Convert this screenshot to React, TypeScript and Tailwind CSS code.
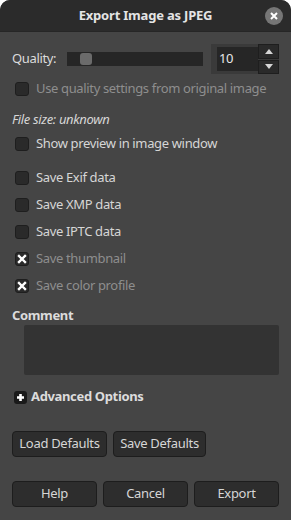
import React, { useState } from 'react';

const font = { fontFamily: '"Noto Sans", "Open Sans", sans-serif' };

const Check: React.FC<{ checked?: boolean; disabled?: boolean; label: string }> = ({ checked, disabled, label }) => (
  <div className="flex items-center h-[20px] pl-[15px] gap-[7px]">
    <div className="w-[14px] h-[14px] shrink-0 rounded-[3px] bg-[#2a2a2a] border border-[#1e1e1e] flex items-center justify-center">
      {checked && (
        <svg width="10" height="10" viewBox="0 0 10 10">
          <path d="M2 2 L8 8 M8 2 L2 8" stroke="#ffffff" strokeWidth="2.4" strokeLinecap="square" />
        </svg>
      )}
    </div>
    <span className={`whitespace-nowrap ${disabled ? 'text-[#8e8e8e]' : 'text-[#d6d6d6]'}`}>{label}</span>
  </div>
);

const Btn: React.FC<{ children: React.ReactNode; className?: string }> = ({ children, className }) => (
  <button className={`h-[26px] rounded-[4px] bg-[#2d2d2d] border border-[#1d1d1d] text-[#d6d6d6] text-[13px] tracking-[-0.3px] ${className ?? ''}`}>
    {children}
  </button>
);

export default function App() {
  const [quality] = useState(10);

  return (
    <div className="w-[291px] h-[520px] bg-[#454545] rounded-t-[10px] overflow-hidden flex flex-col text-[13px] tracking-[-0.35px] text-[#d6d6d6]" style={font}>
      {/* header bar */}
      <div className="h-[32px] bg-[#2b2b2b] relative flex items-center justify-center border-b border-[#262626]">
        <span className="font-bold text-[#e4e4e4] tracking-[-0.2px]">Export Image as JPEG</span>
        <div className="absolute right-[8px] top-[7px] w-[18px] h-[18px] rounded-full bg-[#767676] flex items-center justify-center">
          <svg width="8" height="8" viewBox="0 0 8 8">
            <path d="M1 1 L7 7 M7 1 L1 7" stroke="#ffffff" strokeWidth="2" />
          </svg>
        </div>
      </div>

      <div className="flex flex-col px-[12px] pt-[12px]">
        {/* quality row */}
        <div className="flex items-center h-[30px]">
          <span className="w-[55px] text-[#dcdcdc]">Quality:</span>
          <div className="w-[136px] h-[14px] bg-[#262626] relative">
            <div className="absolute left-[13px] top-[1px] w-[12px] h-[12px] rounded-[3px] bg-[#6b6b6b]" />
          </div>
          <div className="ml-[8px] w-[68px] h-[30px] bg-[#3a3a3a] flex items-stretch">
            <div className="flex-1 my-[3px] ml-[6px] bg-[#262626] flex items-center pl-[2px] text-[#e8e8e8]">{quality}</div>
            <div className="w-[21px] flex flex-col gap-[1px]">
              <div className="flex-1 bg-[#2a2a2a] border border-[#1e1e1e] flex items-center justify-center">
                <svg width="8" height="5" viewBox="0 0 8 5"><path d="M0 5 L4 0 L8 5 Z" fill="#d6d6d6" /></svg>
              </div>
              <div className="flex-1 bg-[#2a2a2a] border border-[#1e1e1e] flex items-center justify-center">
                <svg width="8" height="5" viewBox="0 0 8 5"><path d="M0 0 L4 5 L8 0 Z" fill="#d6d6d6" /></svg>
              </div>
            </div>
          </div>
        </div>

        <div className="mt-[5px] -ml-[12px]">
          <Check label="Use quality settings from original image" disabled />
        </div>

        <div className="mt-[10px] italic text-[#d6d6d6] h-[20px] leading-[20px]">File size: unknown</div>

        <div className="-ml-[12px] mt-[5px] flex flex-col">
          <Check label="Show preview in image window" />
          <div className="h-[14px]" />
          <div className="flex flex-col gap-[7px]">
            <Check label="Save Exif data" />
            <Check label="Save XMP data" />
            <Check label="Save IPTC data" />
            <Check label="Save thumbnail" checked disabled />
            <Check label="Save color profile" checked disabled />
          </div>
        </div>

        <div className="mt-[9px] font-bold text-[#dcdcdc] h-[20px] leading-[20px]">Comment</div>
        <div className="ml-[12px] h-[50px] bg-[#333333] rounded-[2px]" />

        <div className="mt-[12px] flex items-center gap-[4px] h-[20px] pl-[2px]">
          <div className="w-[13px] h-[13px] rounded-[3px] bg-[#1a1a1a] flex items-center justify-center">
            <svg width="9" height="9" viewBox="0 0 9 9"><path d="M4.5 1 V8 M1 4.5 H8" stroke="#ffffff" strokeWidth="2.6" /></svg>
          </div>
          <span className="font-bold text-[#dcdcdc]">Advanced Options</span>
        </div>

        <div className="mt-[24px] flex gap-[6px]">
          <Btn className="w-[95px]">Load Defaults</Btn>
          <Btn className="w-[93px]">Save Defaults</Btn>
        </div>

        <div className="mt-[24px] grid grid-cols-3 gap-[6px]">
          <Btn>Help</Btn>
          <Btn>Cancel</Btn>
          <Btn>Export</Btn>
        </div>
      </div>
    </div>
  );
}
